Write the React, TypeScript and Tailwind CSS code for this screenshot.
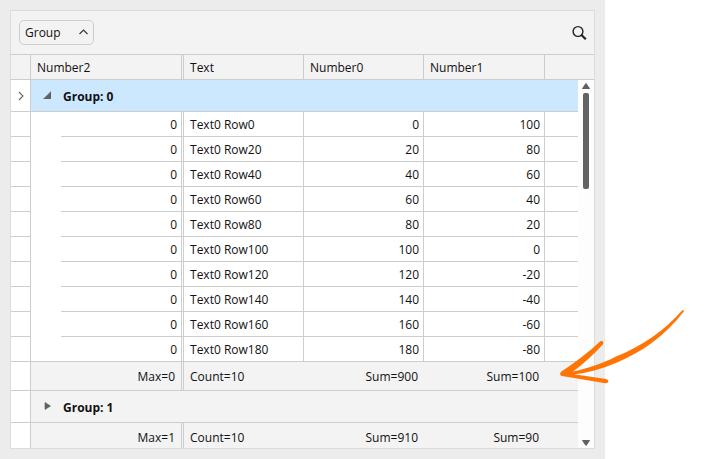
type Row = { n2: number; text: string; n0: number; n1: number };

const rows: Row[] = Array.from({ length: 10 }, (_, i) => ({
  n2: 0,
  text: `Text0 Row${i * 20}`,
  n0: i * 20,
  n1: 100 - i * 20,
}));

function IndicatorCell({ current = false }: { current?: boolean }) {
  return (
    <td className="border-r border-b border-[#cdcdcd] bg-white">
      {current && (
        <svg className="mx-auto block" width="7" height="10" viewBox="0 0 7 10" aria-label="Current row">
          <path d="M2 1 L6 5 L2 9" fill="none" stroke="#666" strokeWidth="1.1" />
        </svg>
      )}
    </td>
  );
}

function GroupRow({ label, expanded = false, current = false }: { label: string; expanded?: boolean; current?: boolean }) {
  return (
    <tr className="h-8">
      <IndicatorCell current={current} />
      <td colSpan={6} className={`border-b border-[#cdcdcd] p-0 ${current ? "bg-[#cce8ff]" : "bg-[#f3f3f3]"}`}>
        <button type="button" aria-expanded={expanded} className="flex items-center gap-3 pt-0.5 pl-3 font-bold">
          <svg width="8" height="8" viewBox="0 0 8 8" className="mb-1">
            <path d={expanded ? "M8 0.5 V8 H0.5 Z" : "M2 0.5 L7.5 4 L2 7.5 Z"} fill="#606060" stroke="#606060" strokeWidth="0.6" />
          </svg>
          {label}
        </button>
      </td>
    </tr>
  );
}

function DataRow({ row, last }: { row: Row; last: boolean }) {
  return (
    <tr className="h-[25px] [&>td]:pt-0.5">
      <IndicatorCell />
      <td className={last ? "border-b border-[#cdcdcd]" : ""} />
      <td className="border-r-3 border-b border-[#cdcdcd] pr-1 text-right [border-right-style:double]">{row.n2}</td>
      <td className="border-r border-b border-[#cdcdcd] pl-1.5">{row.text}</td>
      <td className="border-r border-b border-[#cdcdcd] pr-1 text-right">{row.n0}</td>
      <td className="border-r border-b border-[#cdcdcd] pr-1 text-right">{row.n1}</td>
      <td className="border-b border-[#cdcdcd]" />
    </tr>
  );
}

function SummaryRow({ values }: { values: [string, string, string, string] }) {
  return (
    <tr className="h-[29px] bg-[#f3f3f3]">
      <IndicatorCell />
      <td colSpan={2} className="border-r-3 border-b border-[#cdcdcd] pt-0.5 pr-1.5 text-right [border-right-style:double]">
        {values[0]}
      </td>
      <td className="border-b border-[#cdcdcd] pt-0.5 pl-1.5">{values[1]}</td>
      <td className="border-b border-[#cdcdcd] pt-0.5 pr-1.5 text-right">{values[2]}</td>
      <td className="border-b border-[#cdcdcd] pt-0.5 pr-1.5 text-right">{values[3]}</td>
      <td className="border-b border-[#cdcdcd]" />
    </tr>
  );
}

function ScrollBar() {
  return (
    <div className="absolute top-[25px] right-0 bottom-0 flex w-4 flex-col items-center bg-[#fdfdfd] py-0.5">
      <button type="button" aria-label="Scroll up">
        <svg className="block" width="10" height="8" viewBox="0 0 10 8">
          <path d="M5 1.5 L8.5 6.5 H1.5 Z" fill="#606060" stroke="#606060" strokeLinejoin="round" />
        </svg>
      </button>
      <div className="mt-[3px] h-24 w-1.5 rounded-xs bg-[#636363]" />
      <button type="button" aria-label="Scroll down" className="mt-auto">
        <svg className="block" width="10" height="8" viewBox="0 0 10 8">
          <path d="M5 7.5 L1.5 2.5 H8.5 Z" fill="#606060" stroke="#606060" strokeLinejoin="round" />
        </svg>
      </button>
    </div>
  );
}

export default function App() {
  return (
    <div className="relative flex h-screen bg-white font-['Segoe_UI','Open_Sans',sans-serif] text-xs text-[#111]">
      <main className="flex min-w-0 flex-1 flex-col bg-[#ececec] p-2.5">
        <section className="flex min-h-0 flex-1 flex-col border border-[#dcdcdc] bg-white">
          <div className="flex h-11 shrink-0 items-center justify-between border-b border-[#cdcdcd] bg-[#f3f3f3] pr-[7px] pl-2">
            <button
              type="button"
              className="flex h-[25px] w-[75px] items-center justify-between rounded-[5px] border border-[#cdcdcd] pr-[5px] pl-[5px]"
            >
              Group
              <svg width="9" height="6" viewBox="0 0 9 6" className="mb-0.5">
                <path d="M0.5 5 L4.5 1 L8.5 5" fill="none" stroke="#333" strokeWidth="1.1" />
              </svg>
            </button>
            <button type="button" aria-label="Search">
              <svg className="block" width="15" height="15" viewBox="0 0 15 15" fill="none" stroke="#222">
                <circle cx="6" cy="6.5" r="4.9" strokeWidth="1.4" />
                <path d="M9.5 10 L13.8 14.3" strokeWidth="2.1" />
              </svg>
            </button>
          </div>

          <div className="relative min-h-0 flex-1 overflow-hidden">
            <table className="w-full table-fixed border-separate border-spacing-0 leading-4">
              <colgroup>
                <col className="w-5" />
                <col className="w-[30px]" />
                <col className="w-[123px]" />
                <col className="w-[120px]" />
                <col className="w-[120px]" />
                <col className="w-[121px]" />
                <col />
              </colgroup>
              <thead>
                <tr className="h-[25px] bg-[#f3f3f3] text-left [&>th]:pt-0.5 [&>th]:font-normal">
                  <th className="border-r border-b border-[#cdcdcd]" />
                  <th colSpan={2} className="border-r-3 border-b border-[#cdcdcd] pl-1.5 [border-right-style:double]">
                    Number2
                  </th>
                  <th className="border-r border-b border-[#cdcdcd] pl-1.5">Text</th>
                  <th className="border-r border-b border-[#cdcdcd] pl-1.5">Number0</th>
                  <th className="border-r border-b border-[#cdcdcd] pl-1.5">Number1</th>
                  <th className="border-b border-[#cdcdcd]" />
                </tr>
              </thead>
              <tbody>
                <GroupRow label="Group: 0" expanded current />
                {rows.map((row, i) => (
                  <DataRow key={row.text} row={row} last={i === rows.length - 1} />
                ))}
                <SummaryRow values={["Max=0", "Count=10", "Sum=900", "Sum=100"]} />
                <GroupRow label="Group: 1" />
                <SummaryRow values={["Max=1", "Count=10", "Sum=910", "Sum=90"]} />
              </tbody>
            </table>
            <ScrollBar />
          </div>
        </section>
      </main>
      <div className="w-[100px] shrink-0" />

      <svg className="pointer-events-none absolute top-[305px] right-[15px]" width="130" height="85" viewBox="560 305 130 85" aria-hidden="true">
        <path
          d="M682.6 310 Q684.6 310 683.6 311.8 C664 337 642 352 617 362.4 C602 369 586 373 574 374.2 L606 379 C609.4 379.8 609 383.6 605.5 383.2 L562 376 C559.6 375.4 559.6 373 561.5 371.6 C576 362 589 352 600 341.6 C602.4 340.2 604.4 342 602.8 344.4 C593 355 583 364 573 371.6 C586 369 602 364 616 356.6 C642 346 664 331 682.6 310 Z"
          fill="#ff7505"
        />
      </svg>
    </div>
  );
}
